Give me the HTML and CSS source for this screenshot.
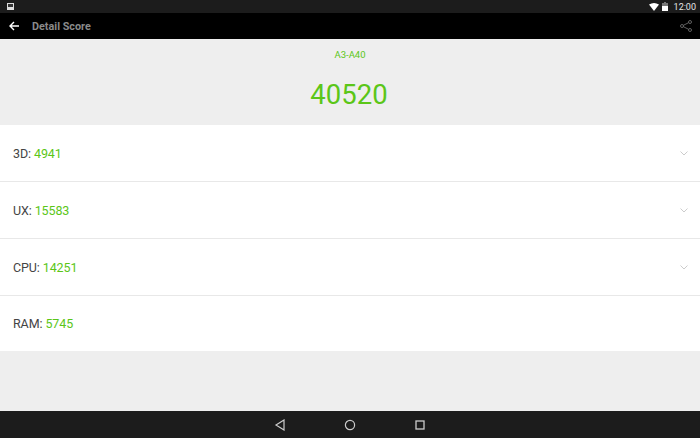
FILE: index.html
```html
<!DOCTYPE html>
<html lang="en">
<head>
    <meta charset="UTF-8">
    <title>Detail Score</title>
    <link rel="stylesheet" href="styles.css">
</head>
<body>
    <div class="status-bar">
        <svg class="status-pic" width="7" height="7" viewBox="0 0 7 7"><rect width="7" height="7" fill="#ddd"/><rect x="1" y="1" width="5" height="3" fill="#333"/></svg>
        <div class="status-right">
            <svg width="10" height="8" viewBox="0 0 10 8"><path d="M0 1.5Q5 -1.5 10 1.5L5 8Z" fill="#fff"/></svg>
            <svg width="6" height="9" viewBox="0 0 6 9"><path d="M2 0H4V1H6V9H0V1H2Z" fill="#777"/><rect x="0" y="4" width="6" height="5" fill="#fff"/></svg>
            <span class="clock">12:00</span>
        </div>
    </div>

    <div class="toolbar">
        <svg class="back-arrow" width="10" height="10" viewBox="0 0 10 10"><path d="M10 5H1.2M5 1L1 5L5 9" fill="none" stroke="#fff" stroke-width="1.4"/></svg>
        <span class="toolbar-title">Detail Score</span>
        <svg class="share" width="12" height="12" viewBox="0 0 12 12"><g fill="none" stroke="#777" stroke-width="0.8"><circle cx="2" cy="6" r="1.5"/><circle cx="10" cy="2" r="1.5"/><circle cx="10" cy="10" r="1.5"/><path d="M3.4 5.3L8.6 2.7M3.4 6.7L8.6 9.3"/></g></svg>
    </div>

    <div class="main">
        <div class="summary">
            <div class="device">A3-A40</div>
            <div class="total">40520</div>
        </div>
        <div class="rows">
            <div class="row"><span>3D: <b>4941</b></span><svg class="chevron" width="8" height="5" viewBox="0 0 8 5"><path d="M0.5 0.5L4 4L7.5 0.5" fill="none" stroke="#ccc"/></svg></div>
            <div class="row"><span>UX: <b>15583</b></span><svg class="chevron" width="8" height="5" viewBox="0 0 8 5"><path d="M0.5 0.5L4 4L7.5 0.5" fill="none" stroke="#ccc"/></svg></div>
            <div class="row"><span>CPU: <b>14251</b></span><svg class="chevron" width="8" height="5" viewBox="0 0 8 5"><path d="M0.5 0.5L4 4L7.5 0.5" fill="none" stroke="#ccc"/></svg></div>
            <div class="row"><span>RAM: <b>5745</b></span></div>
        </div>
    </div>

    <div class="nav-bar">
        <svg width="12" height="12" viewBox="0 0 12 12"><path d="M10 1V11L2 6Z" fill="none" stroke="#ccc" stroke-width="1.2"/></svg>
        <svg width="12" height="12" viewBox="0 0 12 12"><circle cx="6" cy="6" r="4.6" fill="none" stroke="#ccc" stroke-width="1.2"/></svg>
        <svg width="12" height="12" viewBox="0 0 12 12"><rect x="2" y="2" width="8" height="8" fill="none" stroke="#ccc" stroke-width="1.3"/></svg>
    </div>
</body>
</html>
```

FILE: styles.css
```css
html, body {
    height: 100%;
}

body {
    margin: 0;
    display: flex;
    flex-direction: column;
    overflow: hidden;
    background: #eeeeee;
    font-family: Roboto, "Liberation Sans", sans-serif;
}

.status-bar {
    height: 13px;
    flex: none;
    display: flex;
    align-items: center;
    justify-content: space-between;
    padding: 0 4px 0 7px;
    background: #1c1c1c;
}

.status-right {
    display: flex;
    align-items: center;
    gap: 3px;
}

.clock {
    margin-left: 3px;
    font-size: 9px;
    color: #e6e6e6;
}

.toolbar {
    height: 26px;
    flex: none;
    display: flex;
    align-items: center;
    padding: 0 8px 0 9px;
    background: #000;
}

.toolbar-title {
    margin-left: 13px;
    font-size: 10.8px;
    font-weight: 700;
    color: #8a8a8a;
}

.share {
    margin-left: auto;
}

.main {
    flex: 1;
}

.summary {
    height: 86px;
    text-align: center;
    color: #5bc618;
}

.device {
    padding-top: 10px;
    font-size: 9.5px;
    line-height: 12px;
}

.total {
    margin-top: 17px;
    padding-right: 2px;
    font-size: 27.5px;
    line-height: 34px;
}

.row {
    height: 56px;
    display: flex;
    align-items: center;
    justify-content: space-between;
    padding: 0 12px 0 13px;
    background: #fff;
    border-bottom: 1px solid #e8e8e8;
    font-size: 12.5px;
    letter-spacing: -0.1px;
    color: #444;
}

.row:last-child {
    height: 55px;
    border-bottom: none;
}

.row b {
    font-weight: 400;
    color: #5bc618;
}

.nav-bar {
    height: 27px;
    flex: none;
    display: flex;
    align-items: center;
    justify-content: center;
    gap: 58px;
    background: #1c1c1c;
}
```
